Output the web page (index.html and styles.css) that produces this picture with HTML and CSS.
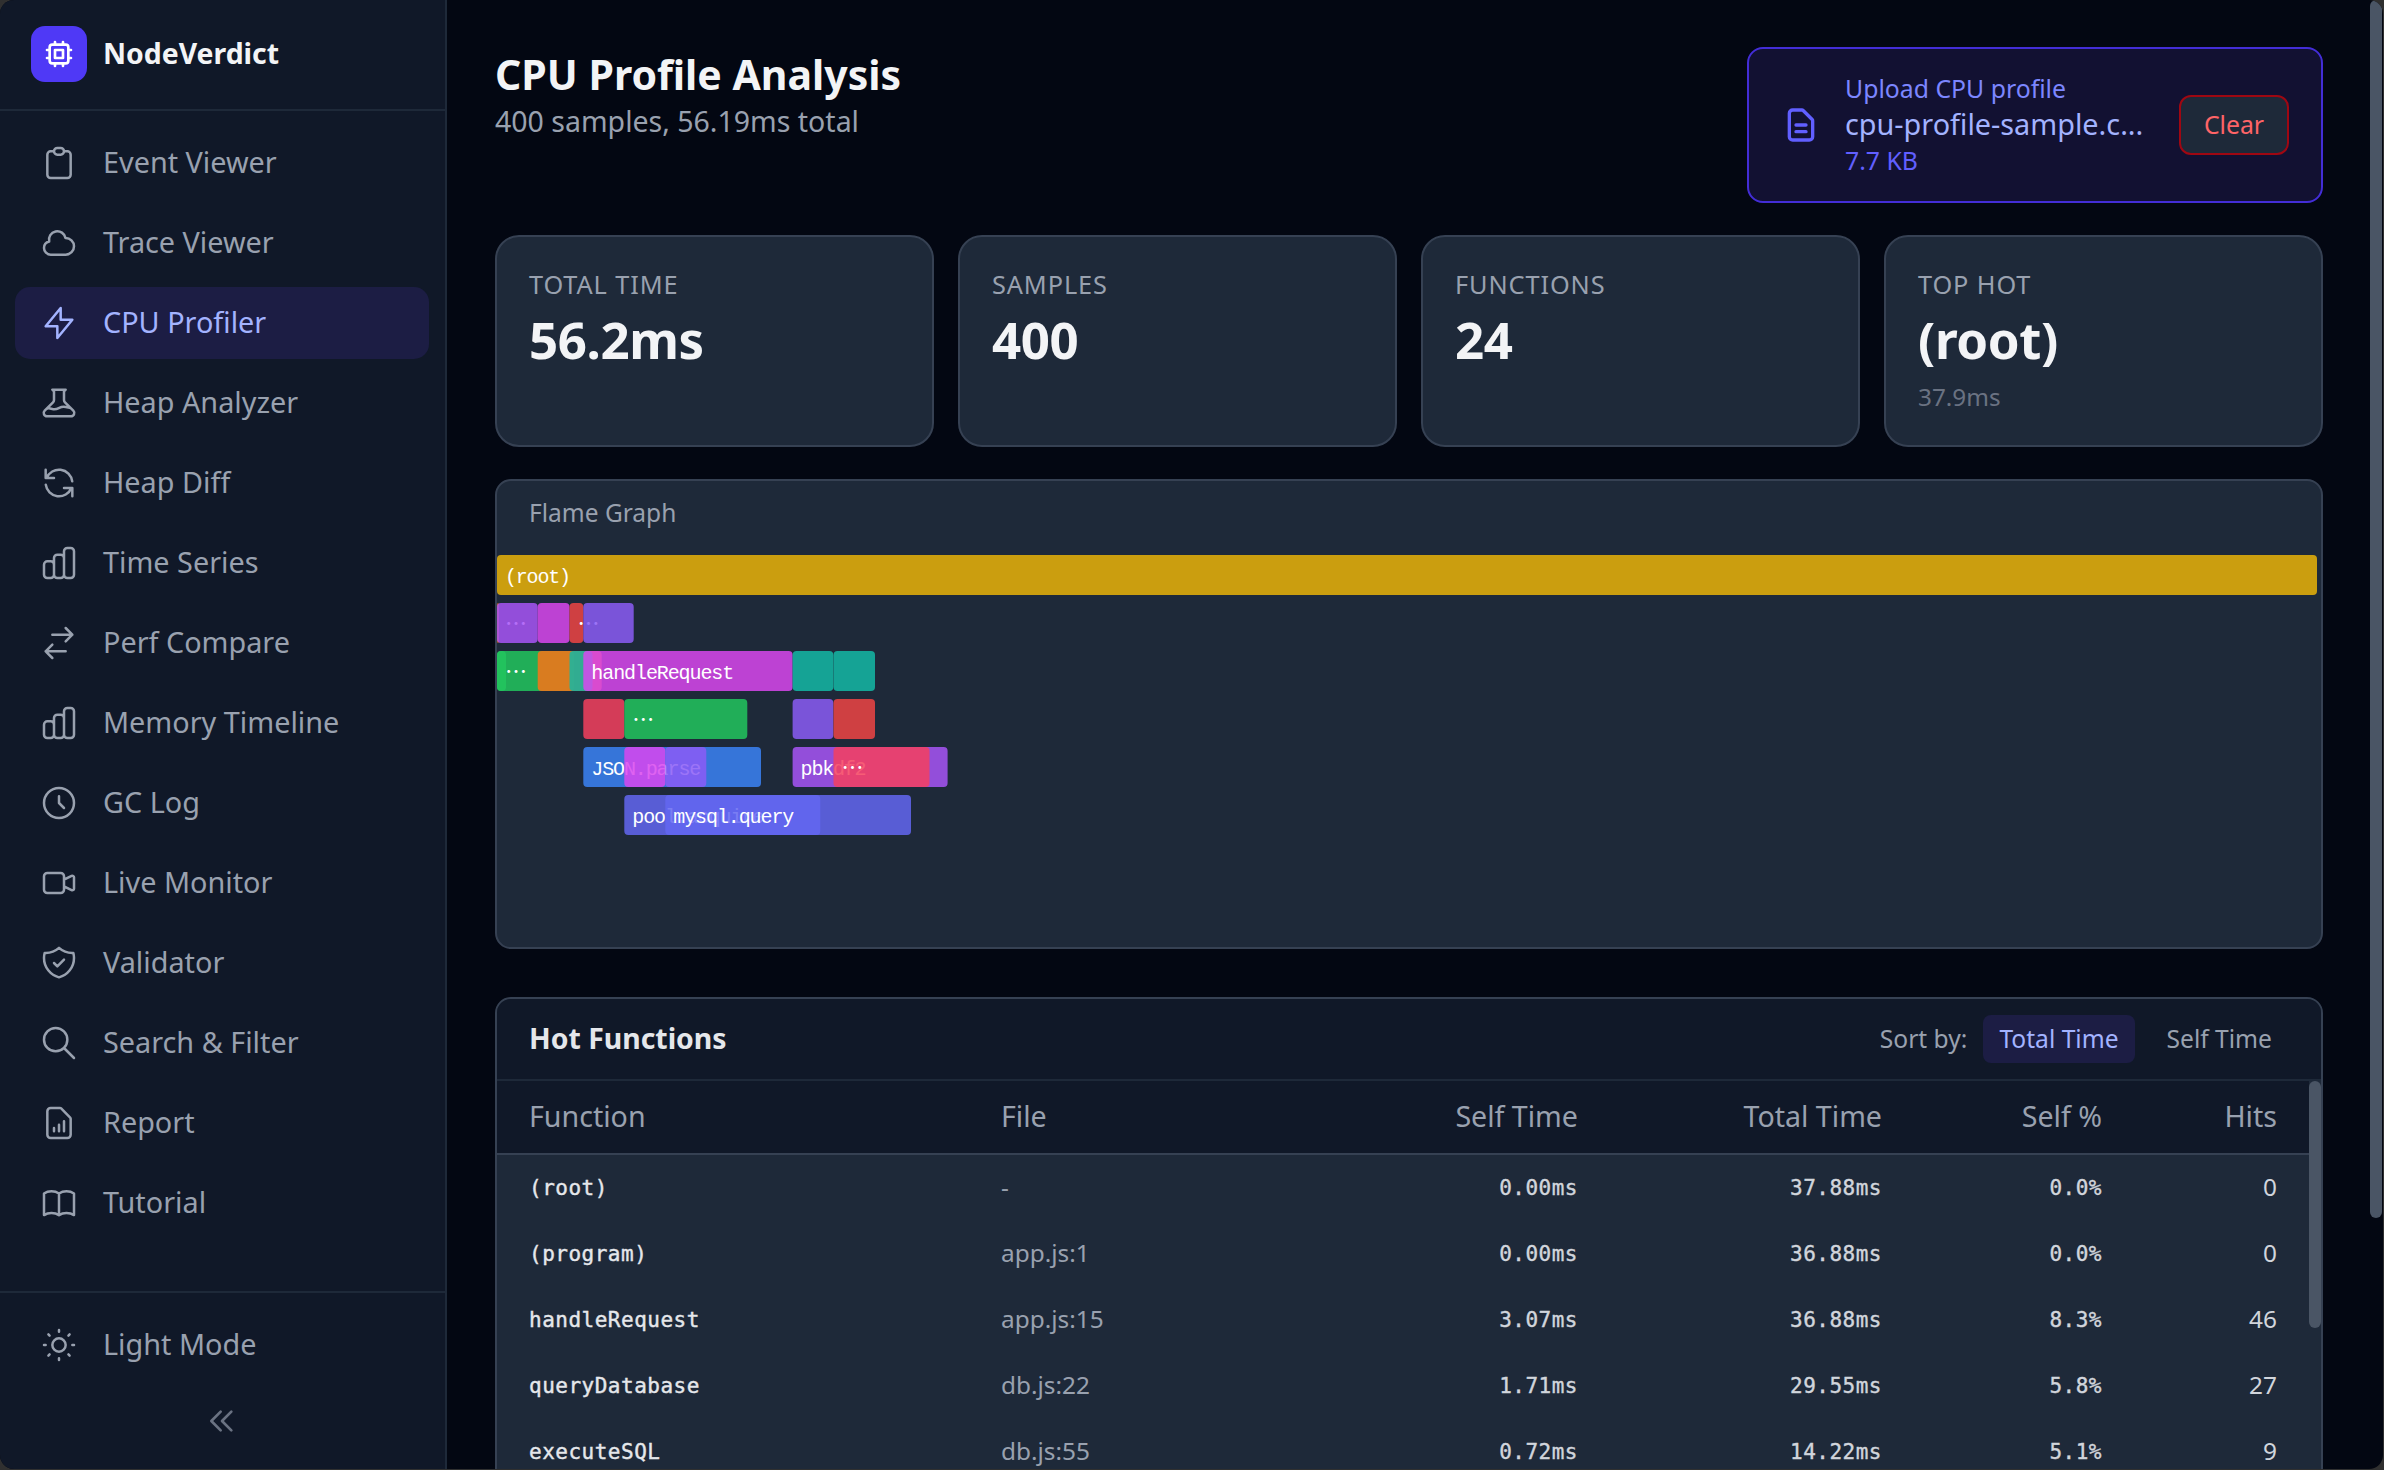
FILE: index.html
```
<!DOCTYPE html>
<html lang="en">
<head>
  <meta charset="UTF-8">
  <title>NodeVerdict - CPU Profiler</title>
  <link rel="stylesheet" href="styles.css">
</head>
<body>
  <div class="window">
    <aside class="sidebar">
      <div class="brand">
        <div class="brand-logo">
          <svg viewBox="0 0 24 24"><path d="M9 3v2m6-2v2M9 19v2m6-2v2M5 9H3m2 6H3m18-6h-2m2 6h-2M7 19h10a2 2 0 002-2V7a2 2 0 00-2-2H7a2 2 0 00-2 2v10a2 2 0 002 2zM9 9h6v6H9V9z"/></svg>
        </div>
        <span class="brand-name">NodeVerdict</span>
      </div>
      <nav class="nav">
        <a class="nav-item">
          <svg viewBox="0 0 24 24"><path d="M9 5H7a2 2 0 00-2 2v12a2 2 0 002 2h10a2 2 0 002-2V7a2 2 0 00-2-2h-2M9 5a2 2 0 002 2h2a2 2 0 002-2M9 5a2 2 0 012-2h2a2 2 0 012 2"/></svg>
          <span>Event Viewer</span>
        </a>
        <a class="nav-item">
          <svg viewBox="0 0 24 24"><path d="M3 15a4 4 0 004 4h9a5 5 0 10-.1-9.999 5.002 5.002 0 10-9.78 2.096A4.001 4.001 0 003 15z"/></svg>
          <span>Trace Viewer</span>
        </a>
        <a class="nav-item active">
          <svg viewBox="0 0 24 24"><path d="M13 10V3L4 14h7v7l9-11h-7z"/></svg>
          <span>CPU Profiler</span>
        </a>
        <a class="nav-item">
          <svg viewBox="0 0 24 24"><path d="M19.428 15.428a2 2 0 00-1.022-.547l-2.387-.477a6 6 0 00-3.86.517l-.318.158a6 6 0 01-3.86.517L6.05 15.21a2 2 0 00-1.806.547M8 4h8l-1 1v5.172a2 2 0 00.586 1.414l5 5c1.26 1.26.367 3.414-1.415 3.414H4.828c-1.782 0-2.674-2.154-1.414-3.414l5-5A2 2 0 009 10.172V5L8 4z"/></svg>
          <span>Heap Analyzer</span>
        </a>
        <a class="nav-item">
          <svg viewBox="0 0 24 24"><path d="M4 4v5h.582m15.356 2A8.001 8.001 0 004.582 9m0 0H9m11 11v-5h-.581m0 0a8.003 8.003 0 01-15.357-2m15.357 2H15"/></svg>
          <span>Heap Diff</span>
        </a>
        <a class="nav-item">
          <svg viewBox="0 0 24 24"><path d="M9 19v-6a2 2 0 00-2-2H5a2 2 0 00-2 2v6a2 2 0 002 2h2a2 2 0 002-2zm0 0V9a2 2 0 012-2h2a2 2 0 012 2v10m-6 0a2 2 0 002 2h2a2 2 0 002-2m0 0V5a2 2 0 012-2h2a2 2 0 012 2v14a2 2 0 01-2 2h-2a2 2 0 01-2-2z"/></svg>
          <span>Time Series</span>
        </a>
        <a class="nav-item">
          <svg viewBox="0 0 24 24"><path d="M8 7h12m0 0l-4-4m4 4l-4 4m0 6H4m0 0l4 4m-4-4l4-4"/></svg>
          <span>Perf Compare</span>
        </a>
        <a class="nav-item">
          <svg viewBox="0 0 24 24"><path d="M9 19v-6a2 2 0 00-2-2H5a2 2 0 00-2 2v6a2 2 0 002 2h2a2 2 0 002-2zm0 0V9a2 2 0 012-2h2a2 2 0 012 2v10m-6 0a2 2 0 002 2h2a2 2 0 002-2m0 0V5a2 2 0 012-2h2a2 2 0 012 2v14a2 2 0 01-2 2h-2a2 2 0 01-2-2z"/></svg>
          <span>Memory Timeline</span>
        </a>
        <a class="nav-item">
          <svg viewBox="0 0 24 24"><path d="M12 8v4l3 3m6-3a9 9 0 11-18 0 9 9 0 0118 0z"/></svg>
          <span>GC Log</span>
        </a>
        <a class="nav-item">
          <svg viewBox="0 0 24 24"><path d="M15 10l4.553-2.276A1 1 0 0121 8.618v6.764a1 1 0 01-1.447.894L15 14M5 18h8a2 2 0 002-2V8a2 2 0 00-2-2H5a2 2 0 00-2 2v8a2 2 0 002 2z"/></svg>
          <span>Live Monitor</span>
        </a>
        <a class="nav-item">
          <svg viewBox="0 0 24 24"><path d="M9 12l2 2 4-4m5.618-4.016A11.955 11.955 0 0112 2.944a11.955 11.955 0 01-8.618 3.04A12.02 12.02 0 003 9c0 5.591 3.824 10.29 9 11.622 5.176-1.332 9-6.03 9-11.622 0-1.042-.133-2.052-.382-3.016z"/></svg>
          <span>Validator</span>
        </a>
        <a class="nav-item">
          <svg viewBox="0 0 24 24"><path d="M21 21l-6-6m2-5a7 7 0 11-14 0 7 7 0 0114 0z"/></svg>
          <span>Search &amp; Filter</span>
        </a>
        <a class="nav-item">
          <svg viewBox="0 0 24 24"><path d="M9 17v-2m3 2v-4m3 4v-6m2 10H7a2 2 0 01-2-2V5a2 2 0 012-2h5.586a1 1 0 01.707.293l5.414 5.414a1 1 0 01.293.707V19a2 2 0 01-2 2z"/></svg>
          <span>Report</span>
        </a>
        <a class="nav-item">
          <svg viewBox="0 0 24 24"><path d="M12 6.253v13m0-13C10.832 5.477 9.246 5 7.5 5S4.168 5.477 3 6.253v13C4.168 18.477 5.754 18 7.5 18s3.332.477 4.5 1.253m0-13C13.168 5.477 14.754 5 16.5 5c1.747 0 3.332.477 4.5 1.253v13C19.832 18.477 18.247 18 16.5 18c-1.746 0-3.332.477-4.5 1.253"/></svg>
          <span>Tutorial</span>
        </a>
      </nav>
      <div class="sidebar-footer">
        <a class="nav-item">
          <svg viewBox="0 0 24 24"><path d="M12 3v1m0 16v1m9-9h-1M4 12H3m15.364 6.364l-.707-.707M6.343 6.343l-.707-.707m12.728 0l-.707.707M6.343 17.657l-.707.707M16 12a4 4 0 11-8 0 4 4 0 018 0z"/></svg>
          <span>Light Mode</span>
        </a>
        <button class="collapse">
          <svg viewBox="0 0 24 24"><path d="M11 19l-7-7 7-7m8 14l-7-7 7-7"/></svg>
        </button>
      </div>
    </aside>

    <main class="main">
      <header class="page-header">
        <div>
          <h1>CPU Profile Analysis</h1>
          <p class="subtitle">400 samples, 56.19ms total</p>
        </div>
        <div class="upload">
          <svg viewBox="0 0 24 24"><path d="M9 12h6m-6 4h6m2 5H7a2 2 0 01-2-2V5a2 2 0 012-2h5.586a1 1 0 01.707.293l5.414 5.414a1 1 0 01.293.707V19a2 2 0 01-2 2z"/></svg>
          <div class="upload-info">
            <div class="upload-label">Upload CPU profile</div>
            <div class="upload-name">cpu-profile-sample.c...</div>
            <div class="upload-size">7.7 KB</div>
          </div>
          <button class="clear">Clear</button>
        </div>
      </header>

      <section class="stats">
        <div class="stat">
          <div class="stat-label">TOTAL TIME</div>
          <div class="stat-value">56.2ms</div>
        </div>
        <div class="stat">
          <div class="stat-label">SAMPLES</div>
          <div class="stat-value">400</div>
        </div>
        <div class="stat">
          <div class="stat-label">FUNCTIONS</div>
          <div class="stat-value">24</div>
        </div>
        <div class="stat">
          <div class="stat-label">TOP HOT</div>
          <div class="stat-value">(root)</div>
          <div class="stat-sub">37.9ms</div>
        </div>
      </section>

      <section class="flame">
        <h3>Flame Graph</h3>
        <svg id="flame-graph" width="1824" height="392"></svg>
      </section>

      <section class="hot">
        <div class="hot-header">
          <h2>Hot Functions</h2>
          <div class="sort">
            <span>Sort by:</span>
            <button class="sort-btn active">Total Time</button>
            <button class="sort-btn">Self Time</button>
          </div>
        </div>
        <div class="hot-body">
          <table>
            <colgroup>
              <col class="col-function">
              <col class="col-file">
              <col class="col-self">
              <col class="col-total">
              <col class="col-percent">
              <col class="col-hits">
            </colgroup>
            <thead>
              <tr>
                <th>Function</th>
                <th>File</th>
                <th class="num">Self Time</th>
                <th class="num">Total Time</th>
                <th class="num">Self %</th>
                <th class="num">Hits</th>
              </tr>
            </thead>
            <tbody id="hot-rows"></tbody>
          </table>
          <div class="table-scrollbar"></div>
        </div>
      </section>
    </main>
    <div class="page-scrollbar"></div>
  </div>

  <script>
    const ROW_HEIGHT = 48;
    const BAR_HEIGHT = 40;
    const CHAR_WIDTH = 11;

    // row, x, width, color, label
    const frames = [
      [0, 0, 1820, '#eab308', '(root)'],
      [1, 0, 2, '#f97316', '…'],
      [1, 0, 40.7, '#a855f7', ''],
      [1, 40.7, 31.8, '#d946ef', ''],
      [1, 72.5, 13.8, '#ef4444', '…'],
      [1, 86.3, 50.4, '#8b5cf6', ''],
      [2, 0, 9, '#22c55e', ''],
      [2, 0, 77, '#22c55e', '…'],
      [2, 40.7, 64, '#f97316', ''],
      [2, 72.5, 23, '#14b8a6', ''],
      [2, 86.3, 209.3, '#d946ef', 'handleRequest'],
      [2, 295.6, 40.7, '#14b8a6', ''],
      [2, 336.5, 41.5, '#14b8a6', ''],
      [3, 86.3, 41, '#f43f5e', ''],
      [3, 127.3, 123, '#22c55e', '…'],
      [3, 295.6, 40.7, '#8b5cf6', ''],
      [3, 336.5, 41.5, '#ef4444', ''],
      [4, 86.3, 177.7, '#3b82f6', 'JSON.parse'],
      [4, 127.3, 41, '#d946ef', ''],
      [4, 168.3, 41, '#8b5cf6', ''],
      [4, 295.6, 155, '#a855f7', 'pbkdf2'],
      [4, 336.5, 96, '#f43f5e', '…'],
      [5, 127.3, 286.7, '#6366f1', 'pool.acquire'],
      [5, 168.3, 155, '#6366f1', 'mysql.query']
    ];

    const hotFunctions = [
      { name: '(root)', file: '-', self: '0.00ms', total: '37.88ms', percent: '0.0%', hits: 0 },
      { name: '(program)', file: 'app.js:1', self: '0.00ms', total: '36.88ms', percent: '0.0%', hits: 0 },
      { name: 'handleRequest', file: 'app.js:15', self: '3.07ms', total: '36.88ms', percent: '8.3%', hits: 46 },
      { name: 'queryDatabase', file: 'db.js:22', self: '1.71ms', total: '29.55ms', percent: '5.8%', hits: 27 },
      { name: 'executeSQL', file: 'db.js:55', self: '0.72ms', total: '14.22ms', percent: '5.1%', hits: 9 }
    ];

    function drawFlameGraph() {
      document.getElementById('flame-graph').innerHTML = frames.map(([row, x, width, color, label]) => {
        const y = row * ROW_HEIGHT;
        let text = '';
        if (label === '…') {
          text = `<text class="dots" lang="zh-CN" x="${x + 8}" y="${y + 28}">${label}</text>`;
        } else if (label) {
          text = `<text x="${x + 8}" y="${y + 28}" textLength="${CHAR_WIDTH * label.length}">${label}</text>`;
        }
        return `<rect x="${x}" y="${y}" width="${width}" height="${BAR_HEIGHT}" rx="4" fill="${color}"/>${text}`;
      }).join('');
    }

    function renderHotFunctions() {
      document.getElementById('hot-rows').innerHTML = hotFunctions.map(f => `
        <tr>
          <td class="mono name">${f.name}</td>
          <td class="file">${f.file}</td>
          <td class="mono num">${f.self}</td>
          <td class="mono num">${f.total}</td>
          <td class="mono num">${f.percent}</td>
          <td class="num">${f.hits}</td>
        </tr>
      `).join('');
    }

    drawFlameGraph();
    renderHotFunctions();
  </script>
</body>
</html>
```
FILE: styles.css
```
* {
  box-sizing: border-box;
}
body {
  margin: 0;
  height: 1470px;
  overflow: hidden;
  background-color: #303030;
  font-family: "Noto Sans", sans-serif;
  font-size: 28.8px;
  color: #99a1af;
}
h1,
h2,
h3,
p {
  margin: 0;
}
button {
  font-family: inherit;
  border: none;
  background: none;
  padding: 0;
  cursor: pointer;
}
svg {
  display: block;
  flex-shrink: 0;
  fill: none;
  stroke: currentColor;
  stroke-width: 1.5;
  stroke-linecap: round;
  stroke-linejoin: round;
}
.window {
  position: relative;
  display: flex;
  width: 2383px;
  height: 1469px;
  overflow: hidden;
  border-radius: 14px;
  background-color: #030712;
}

/* Sidebar */
.sidebar {
  display: flex;
  flex-direction: column;
  flex-shrink: 0;
  width: 447px;
  background-color: #101828;
  border-right: 2px solid #1e2939;
}
.brand {
  display: flex;
  align-items: flex-start;
  gap: 16px;
  height: 111px;
  padding: 26px 31px;
  border-bottom: 2px solid #1e2939;
}
.brand-logo {
  display: flex;
  align-items: center;
  justify-content: center;
  width: 56px;
  height: 56px;
  border-radius: 14px;
  background-color: #4f39f6;
  color: #fff;
}
.brand-logo svg {
  width: 32px;
  height: 32px;
  stroke-width: 2;
}
.brand-name {
  font-size: 28.4px;
  font-weight: 700;
  line-height: 54px;
  color: #f3f4f6;
}
.nav {
  display: flex;
  flex-direction: column;
  flex: 1;
  gap: 8px;
  padding: 16px 16px 0 15px;
}
.nav-item {
  display: flex;
  align-items: center;
  gap: 24px;
  height: 72px;
  padding: 0 24px;
  border-radius: 15px;
}
.nav-item span {
  padding-bottom: 3px;
}
.nav-item svg {
  width: 40px;
  height: 40px;
}
.nav-item.active {
  background-color: #1c1d44;
  color: #a3b3ff;
}
.sidebar-footer {
  height: 178px;
  padding: 16px 16px 0 15px;
  border-top: 2px solid #1e2939;
}
.collapse {
  display: flex;
  align-items: center;
  justify-content: center;
  width: 100%;
  height: 80px;
  color: #6a7282;
}
.collapse svg {
  width: 32px;
  height: 32px;
  stroke-width: 2;
}

/* Main column */
.main {
  flex-shrink: 0;
  width: 1876px;
  padding: 47px 0 0 48px;
}
.page-header {
  display: flex;
  justify-content: space-between;
  align-items: flex-start;
  margin-bottom: 32px;
}
h1 {
  font-size: 41px;
  line-height: 54px;
  color: #f3f4f6;
}
.subtitle {
  font-size: 28.5px;
  line-height: 41px;
}
.upload {
  display: flex;
  align-items: center;
  width: 576px;
  height: 156px;
  padding: 0 32px;
  border: 2px solid #432dd7;
  border-radius: 16px;
  background-color: #121132;
  color: #615fff;
}
.upload svg {
  width: 40px;
  height: 40px;
  margin-right: 24px;
  stroke-width: 2;
}
.upload-info {
  flex: 1;
  padding-bottom: 3px;
}
.upload-label,
.upload-size {
  font-size: 24.8px;
  line-height: 34px;
}
.upload-label {
  color: #7c86ff;
}
.upload-name {
  line-height: 38px;
  color: #a3b3ff;
}
.clear {
  width: 110px;
  height: 60px;
  padding-bottom: 2px;
  border: 2px solid #9f0712;
  border-radius: 12px;
  background-color: #1e2939;
  font-size: 24.8px;
  color: #ff6467;
}

/* Stat cards */
.stats {
  display: grid;
  grid-template-columns: repeat(4, 1fr);
  gap: 24px;
  margin-bottom: 32px;
}
.stat {
  height: 212px;
  padding: 29px 32px;
  border: 2px solid #364153;
  border-radius: 24px;
  background-color: #1e2939;
}
.stat-label {
  font-size: 25.3px;
  line-height: 36px;
  letter-spacing: 0.9px;
}
.stat-value {
  margin-top: 7px;
  font-size: 51px;
  font-weight: 700;
  line-height: 60px;
  letter-spacing: -0.4px;
  color: #f3f4f6;
}
.stat-sub {
  margin-top: 10px;
  font-size: 24.3px;
  line-height: 36px;
  color: #6a7282;
}

/* Flame graph */
.flame {
  height: 470px;
  margin-bottom: 48px;
  border: 2px solid #364153;
  border-radius: 16px;
  background-color: #1e2939;
  overflow: hidden;
}
.flame h3 {
  height: 74px;
  padding-left: 32px;
  font-size: 24.5px;
  font-weight: 400;
  line-height: 63px;
}
#flame-graph {
  stroke: none;
}
#flame-graph rect {
  opacity: 0.85;
}
#flame-graph text {
  font-family: "Liberation Mono", monospace;
  font-size: 20px;
  fill: #fff;
}
#flame-graph .dots {
  font-family: "Noto Sans CJK SC", sans-serif;
  font-size: 22px;
}

/* Hot functions table */
.hot {
  height: 700px;
  border: 2px solid #364153;
  border-radius: 16px;
  background-color: #1e2939;
  overflow: hidden;
}
.hot-header {
  display: flex;
  align-items: center;
  justify-content: space-between;
  height: 82px;
  padding: 0 33px 1px 32px;
  border-bottom: 2px solid #1e2939;
  background-color: #101828;
}
.hot-header h2 {
  padding-bottom: 2px;
  font-size: 28.4px;
  color: #e5e7eb;
}
.sort {
  display: flex;
  align-items: center;
  gap: 16px;
  font-size: 24.6px;
}
.sort-btn {
  height: 48px;
  padding: 0 16px;
  border-radius: 8px;
  font-size: 24.6px;
  color: #99a1af;
}
.sort-btn.active {
  background-color: #1c1d44;
  color: #a3b3ff;
}
.hot-body {
  position: relative;
}
table {
  width: 1812px;
  table-layout: fixed;
  border-collapse: separate;
  border-spacing: 0;
}
.col-function {
  width: 472px;
}
.col-file {
  width: 401px;
}
.col-self {
  width: 240px;
}
.col-total {
  width: 304px;
}
.col-percent {
  width: 220px;
}
.col-hits {
  width: 175px;
}
th {
  height: 74px;
  padding: 0 32px 3px;
  border-bottom: 2px solid #364153;
  background-color: #101828;
  font-size: 28.6px;
  font-weight: 400;
  text-align: left;
}
td {
  height: 66px;
  padding: 0 32px 4px;
  font-size: 24.4px;
  color: #d1d5dc;
}
.num {
  text-align: right;
}
.mono {
  padding-bottom: 0;
  font-family: "DejaVu Sans Mono", monospace;
  font-size: 21px;
  letter-spacing: 0.5px;
  -webkit-text-stroke: 0.4px;
}
td.name {
  color: #e5e7eb;
}
td.file {
  color: #99a1af;
}

/* Scrollbar thumbs */
.table-scrollbar,
.page-scrollbar {
  position: absolute;
  width: 12px;
  border-radius: 6px;
  background-color: #4a5565;
}
.table-scrollbar {
  top: 0;
  right: 0;
  height: 247px;
}
.page-scrollbar {
  top: 0;
  right: 1px;
  height: 1218px;
}
```
